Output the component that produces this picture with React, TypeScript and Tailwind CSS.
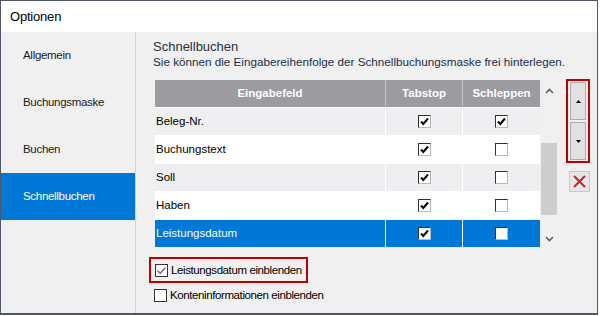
import React from 'react'

type Row = { name: string; tab: boolean; drag: boolean }

const rows: Row[] = [
  { name: 'Beleg-Nr.', tab: true, drag: true },
  { name: 'Buchungstext', tab: true, drag: false },
  { name: 'Soll', tab: true, drag: false },
  { name: 'Haben', tab: true, drag: false },
  { name: 'Leistungsdatum', tab: true, drag: false },
]

const menu = ['Allgemein', 'Buchungsmaske', 'Buchen', 'Schnellbuchen']

function GridCheck({ checked }: { checked: boolean }) {
  return (
    <span className="w-[13px] h-[13px] bg-white border border-t-[#303030] border-l-[#303030] border-r-[#b8b8b8] border-b-[#b8b8b8] flex items-center justify-center">
      {checked && (
        <svg width="11" height="11" viewBox="0 0 11 11">
          <path d="M2 5.5 L4.3 8 L9 2.5" fill="none" stroke="#000" strokeWidth="2" />
        </svg>
      )}
    </span>
  )
}

function WinCheck({ checked, label }: { checked: boolean; label: string }) {
  return (
    <div className="flex items-center gap-[3px]">
      <span className="w-[13px] h-[13px] bg-white border border-[#333] flex items-center justify-center">
        {checked && (
          <svg width="11" height="11" viewBox="0 0 11 11">
            <path d="M1.5 5.5 L4.2 8.2 L9.5 2.5" fill="none" stroke="#6a6a6a" strokeWidth="1.3" />
          </svg>
        )}
      </span>
      <span className="text-[11.5px] tracking-[-0.4px] text-black leading-[16px]">{label}</span>
    </div>
  )
}

function Arrow({ up }: { up: boolean }) {
  return (
    <svg width="5" height="3" viewBox="0 0 5 3">
      <path d={up ? 'M0 3 L2.5 0 L5 3 Z' : 'M0 0 L2.5 3 L5 0 Z'} fill="#000" />
    </svg>
  )
}

export default function App() {
  return (
    <div className="w-[600px] h-[316px] bg-white font-['Liberation_Sans',Arial,sans-serif]">
      <div className="w-[598px] h-[315px] border border-b-2 border-[#4f5766] bg-[#f0f0f0] flex flex-col">
        <div className="h-[31px] bg-white flex items-center pl-[9px] text-[13px] tracking-[-0.2px] text-black">Optionen</div>

        <div className="flex flex-1">
          <aside className="w-[135px] border-r border-[#d2d2d2] flex flex-col">
            {menu.map(m => (
              <div
                key={m}
                className={`h-[47px] flex items-center pl-[22px] text-[11.5px] tracking-[-0.3px] ${
                  m === 'Schnellbuchen' ? 'bg-[#0078d7] text-white' : 'text-[#1a1a1a]'
                }`}
              >
                {m}
              </div>
            ))}
          </aside>

          <main className="flex-1 flex pl-[17px] pt-[7px]">
            <div className="w-[412px] flex flex-col">
              <h2 className="text-[13px] leading-[16px] text-[#2a3140]">Schnellbuchen</h2>
              <p className="text-[11.7px] leading-[15px] text-[#1c2d4a] mt-[-1px] whitespace-nowrap">
                Sie können die Eingabereihenfolge der Schnellbuchungsmaske frei hinterlegen.
              </p>

              <div className="ml-[2px] mt-[11px] flex">
                <div className="flex flex-col">
                  <div className="flex h-[27px] bg-[#9b9ba0] text-white font-bold text-[11.5px]">
                    <div className="w-[230px] flex items-center justify-center">Eingabefeld</div>
                    <div className="w-[77px] border-l border-[#c4c4c8] flex items-center justify-center">Tabstop</div>
                    <div className="w-[78px] border-l border-[#c4c4c8] flex items-center justify-center">Schleppen</div>
                  </div>
                  {rows.map((r, i) => {
                    const sel = i === rows.length - 1
                    const bg = sel ? 'bg-[#0078d7] text-white' : i % 2 === 0 ? 'bg-[#efeff2] text-black' : 'bg-white text-black'
                    return (
                      <div key={r.name} className={`flex h-[28px] border-t border-white text-[11.5px] ${bg}`}>
                        <div className="w-[230px] flex items-center pl-[1px]">{r.name}</div>
                        <div className="w-[77px] border-l border-white flex items-center justify-center">
                          <GridCheck checked={r.tab} />
                        </div>
                        <div className="w-[78px] border-l border-white flex items-center justify-center">
                          <GridCheck checked={r.drag} />
                        </div>
                      </div>
                    )
                  })}
                </div>

                <div className="w-[16px] ml-[1px] flex flex-col items-center bg-[#f0f0f0]">
                  <div className="h-[17px] flex items-center justify-center pt-[4px]">
                    <svg width="9" height="6" viewBox="0 0 9 6">
                      <path d="M1 5 L4.5 1.5 L8 5" fill="none" stroke="#606060" strokeWidth="1.6" />
                    </svg>
                  </div>
                  <div className="flex-1 w-full flex flex-col pt-[46px] pb-[16px]">
                    <div className="flex-1 bg-[#cdcdcd]" />
                  </div>
                  <div className="h-[16px] flex items-center justify-center">
                    <svg width="9" height="6" viewBox="0 0 9 6">
                      <path d="M1 1 L4.5 4.5 L8 1" fill="none" stroke="#606060" strokeWidth="1.6" />
                    </svg>
                  </div>
                </div>
              </div>

              <div className="mt-[10px] ml-[-4px] flex">
                <div className="border-2 border-[#c00000] pl-[4px] pr-[4px] py-[3px]">
                  <WinCheck checked label="Leistungsdatum einblenden" />
                </div>
              </div>
              <div className="mt-[4px] ml-[1px]">
                <WinCheck checked={false} label="Konteninformationen einblenden" />
              </div>
            </div>

            <div className="ml-[1px] pt-[40px] flex flex-col items-center">
              <div className="border-2 border-[#c00000] px-[2px] py-[1px] flex flex-col gap-[2px]">
                <button className="w-[16px] h-[38px] bg-[#e1e1e1] border border-[#adadad] flex items-center justify-center">
                  <Arrow up />
                </button>
                <button className="w-[16px] h-[38px] bg-[#e1e1e1] border border-[#adadad] flex items-center justify-center">
                  <Arrow up={false} />
                </button>
              </div>
              <button className="mt-[8px] ml-[3px] w-[21px] h-[21px] bg-[#e6e6e6] border border-[#c8c8c8] flex items-center justify-center">
                <svg width="15" height="15" viewBox="0 0 15 15">
                  <path d="M2 2 L13 13 M13 2 L2 13" stroke="#c0262a" strokeWidth="2" />
                </svg>
              </button>
            </div>
          </main>
        </div>
      </div>
    </div>
  )
}
